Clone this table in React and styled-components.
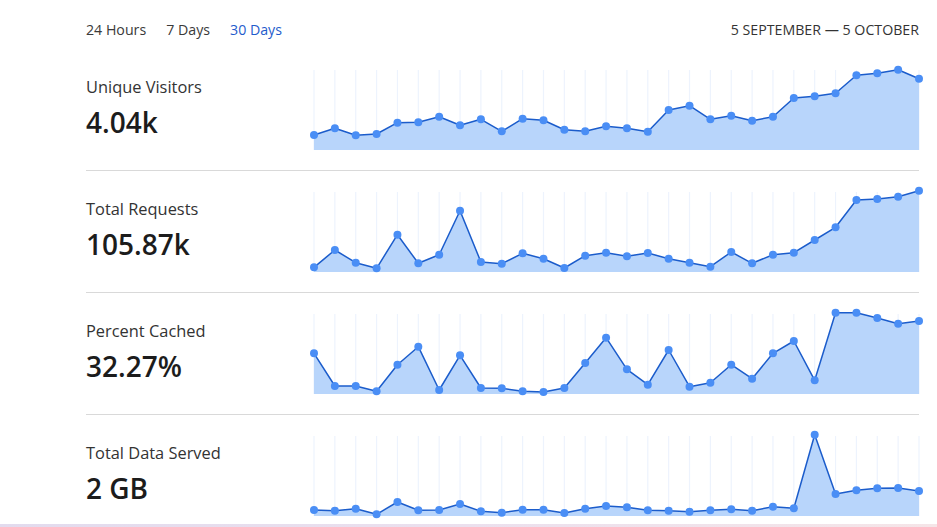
import React from "react";
import styled, { createGlobalStyle } from "styled-components";

const GlobalStyle = createGlobalStyle`
  html, body {
    margin: 0;
    padding: 0;
    background: #ffffff;
    font-family: "Open Sans", "Noto Sans", sans-serif;
    overflow: hidden;
  }
`;

const Page = styled.div`
  width: 937px;
  min-height: 527px;
  display: flex;
  flex-direction: column;
`;

const Content = styled.div`
  margin-left: 86px;
  width: 833px;
`;

const Header = styled.div`
  height: 49px;
  box-sizing: border-box;
  padding-top: 20px;
  display: flex;
  justify-content: space-between;
  align-items: flex-start;
`;

const RangeTabs = styled.div`
  display: flex;
  gap: 20px;
`;

const Tab = styled.span`
  font-size: 14.2px;
  line-height: 20px;
  color: ${(p) => (p.$active ? "#1f5ccc" : "#3a3a3a")};
`;

const DateRange = styled.span`
  font-size: 14.2px;
  line-height: 20px;
  color: #333333;
`;

const MetricRow = styled.div`
  display: grid;
  grid-template-columns: 228px 605px;
  padding: 20px 0 ${(p) => (p.$last ? "8px" : "20px")};
  border-bottom: ${(p) => (p.$last ? "none" : "1px solid #d9d9d9")};
`;

const MetricText = styled.div`
  display: flex;
  flex-direction: column;
  padding-top: 7px;
  gap: 6px;
`;

const MetricLabel = styled.div`
  font-size: 16.4px;
  line-height: 22px;
  color: #333333;
`;

const MetricValue = styled.div`
  font-size: 28px;
  line-height: 36px;
  font-weight: 600;
  color: #1c1c1c;
`;

const ChartSvg = styled.svg`
  display: block;
  width: 605px;
  height: 81px;
  overflow: visible;
`;

const Footer = styled.div`
  height: 3px;
  background: linear-gradient(90deg, #e2dbee 0%, #ebe0ee 50%, #f5e5e8 100%);
`;

const W = 605;
const H = 81;

const Chart = ({ values, top }) => {
  const step = W / (values.length - 1);
  const pts = values.map((v, i) => [i * step, v - top]);
  const line = pts.map((p) => `${p[0].toFixed(2)},${p[1].toFixed(2)}`).join(" ");
  const area = `0,${H} ${line} ${W},${H}`;
  return (
    <ChartSvg viewBox={`0 0 ${W} ${H}`}>
      {pts.map((p, i) => (
        <line
          key={`g${i}`}
          x1={p[0]}
          x2={p[0]}
          y1={1}
          y2={H}
          stroke="#edf3fd"
          strokeWidth="1.2"
        />
      ))}
      <polygon points={area} fill="#b8d5fb" />
      <polyline points={line} fill="none" stroke="#1b5ccb" strokeWidth="1.5" strokeLinejoin="round" />
      {pts.map((p, i) => (
        <circle key={`c${i}`} cx={p[0]} cy={p[1]} r="4" fill="#4a8ef5" />
      ))}
    </ChartSvg>
  );
};

const metrics = [
  {
    label: "Unique Visitors",
    value: "4.04k",
    top: 69,
    data: [135, 128.3, 135.3, 134, 122.7, 122.3, 116.7, 125.3, 119.3, 131.3, 118.7, 120.3, 129.7, 131.3, 126.3, 128.3, 131.7, 110, 105.7, 119.3, 115.7, 120.7, 116.7, 98, 96.3, 93.3, 75.3, 73.3, 69.7, 78.7],
  },
  {
    label: "Total Requests",
    value: "105.87k",
    top: 191,
    data: [267.3, 250, 262.7, 268.3, 234.7, 263.3, 254.7, 210.7, 262, 263.7, 253.3, 258.7, 268, 255.7, 252.7, 256.3, 253, 258.7, 262.7, 266.7, 252, 263.3, 254.7, 252.7, 240, 227.3, 200, 199, 196.7, 190.7],
  },
  {
    label: "Percent Cached",
    value: "32.27%",
    top: 313,
    data: [353.3, 386, 386, 391.3, 364.7, 346.7, 390, 355.3, 388, 388.3, 391.3, 392, 388, 363, 337.7, 369.3, 384.7, 350, 386.7, 382.7, 364.7, 378.7, 353.3, 341, 380.3, 312.7, 312.7, 318, 323.7, 321],
  },
  {
    label: "Total Data Served",
    value: "2 GB",
    top: 435,
    data: [510, 510.7, 508.7, 514.3, 502, 510.3, 510, 504, 511.3, 512.7, 509.7, 509.7, 513, 508.7, 506, 507.3, 510.3, 510.7, 511.7, 510.3, 509.3, 510.7, 506.7, 508.3, 434.7, 494, 490.3, 488.3, 488, 491],
  },
];

const tabs = ["24 Hours", "7 Days", "30 Days"];

export default function App() {
  return (
    <Page>
      <GlobalStyle />
      <Content>
        <Header>
          <RangeTabs>
            {tabs.map((t) => (
              <Tab key={t} $active={t === "30 Days"}>
                {t}
              </Tab>
            ))}
          </RangeTabs>
          <DateRange>5 SEPTEMBER — 5 OCTOBER</DateRange>
        </Header>
        {metrics.map((m, i) => (
          <MetricRow key={m.label} $last={i === metrics.length - 1}>
            <MetricText>
              <MetricLabel>{m.label}</MetricLabel>
              <MetricValue>{m.value}</MetricValue>
            </MetricText>
            <Chart values={m.data} top={m.top} />
          </MetricRow>
        ))}
      </Content>
      <Footer />
    </Page>
  );
}
